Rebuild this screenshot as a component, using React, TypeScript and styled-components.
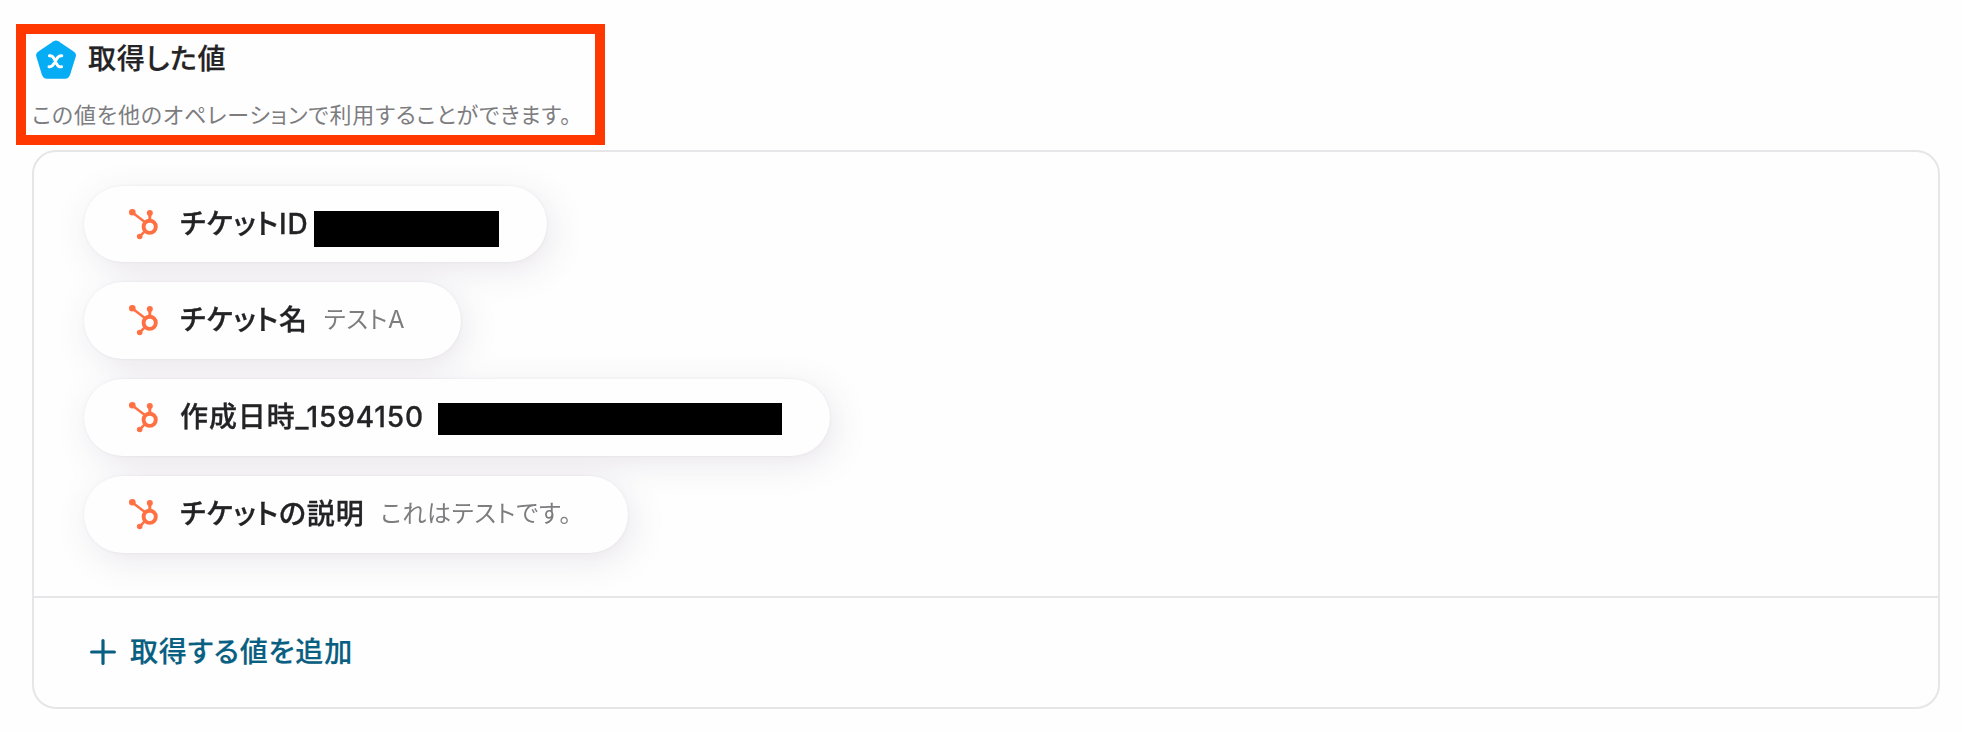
import React from "react";
import styled, { createGlobalStyle } from "styled-components";

const GlobalStyle = createGlobalStyle`
  *, *::before, *::after { box-sizing: border-box; }
  body {
    margin: 0;
    background: #fefefe;
    color: #232326;
    font-family: Inter, "Noto Sans CJK JP", sans-serif;
    font-feature-settings: "palt";
  }
`;

const Page = styled.main`
  display: flex;
  flex-direction: column;
  width: 1962px;
  height: 732px;
  padding: 24px 22px 23px 16px;
`;

const Highlight = styled.header`
  display: flex;
  flex-direction: column;
  align-items: flex-start;
  width: 589px;
  height: 121px;
  padding: 6px 0 0 6px;
  border: 10px solid #ff3700;
`;

const TitleRow = styled.div`
  display: flex;
  align-items: center;
  gap: 12px;
  height: 39px;
  padding-left: 4px;
`;

const Title = styled.h2`
  margin: -1px 0 0;
  font-size: 28px;
  line-height: 36px;
  font-weight: 500;
  letter-spacing: 0.8px;
  -webkit-text-stroke: 0.25px currentColor;
  white-space: nowrap;
`;

const Description = styled.p`
  margin: 20px 0 0;
  font-size: 22px;
  line-height: 32px;
  letter-spacing: 0.85px;
  color: #7d7d80;
  white-space: nowrap;
`;

const Card = styled.section`
  display: flex;
  flex-direction: column;
  width: 1908px;
  height: 559px;
  margin: 5px 0 0 16px;
  border: 2px solid #e6e5e7;
  border-radius: 24px;
`;

const ValueList = styled.ul`
  display: flex;
  flex: 1;
  flex-direction: column;
  align-items: flex-start;
  gap: 20px;
  margin: 0;
  padding: 33.7px 0 0 50px;
  list-style: none;
  filter: drop-shadow(0 0 1px rgba(60, 35, 80, 0.08)) drop-shadow(5px 8px 16px rgba(60, 35, 80, 0.11));
`;

const Pill = styled.li<{ $width: number }>`
  display: flex;
  align-items: center;
  width: ${(p) => p.$width}px;
  height: 76.8px;
  padding-left: 45px;
  border-radius: 39px;
  background: #fefefe;
  white-space: nowrap;
`;

const Name = styled.span`
  margin: -1px 0 0 22px;
  font-size: 28px;
  line-height: 40px;
  font-weight: 500;
  letter-spacing: 0.9px;
  -webkit-text-stroke: 0.3px currentColor;
`;

const Value = styled.span`
  margin: -1px 0 0 16px;
  font-size: 24px;
  line-height: 36px;
  letter-spacing: 0.8px;
  color: #7d7d80;
`;

const Redacted = styled.span<{ $width: number; $height: number; $gap: number; $drop: number }>`
  width: ${(p) => p.$width}px;
  height: ${(p) => p.$height}px;
  margin: ${(p) => p.$drop}px 0 0 ${(p) => p.$gap}px;
  background: #000;
`;

const Footer = styled.footer`
  display: flex;
  align-items: center;
  height: 111px;
  padding: 0 0 2px 56px;
  border-top: 2px solid #e6e5e7;
`;

const AddButton = styled.button`
  display: flex;
  align-items: center;
  gap: 14px;
  padding: 0;
  border: 0;
  background: none;
  color: #095f82;
  font: inherit;
  font-feature-settings: inherit;
  font-size: 28px;
  line-height: 40px;
  font-weight: 500;
  letter-spacing: 0.85px;
  -webkit-text-stroke: 0.2px currentColor;
  white-space: nowrap;
`;

const VariableIcon = () => (
  <svg width="40" height="39" viewBox="0 0 40 39" fill="none">
    <path
      d="M17.6 1.2Q20 -.4 22.4 1.2L38 11.8Q40.6 13.6 39.8 16.4L34.2 34.5Q32.8 38.7 29 38.7H11Q7.2 38.7 5.8 34.5L.3 16.4Q-.5 13.6 2 11.8Z"
      fill="#06adf5"
    />
    <path
      d="M13.4 15.8Q16.6 15.4 18.2 19L20.6 23.8Q22.4 27.4 25.6 26.8M25.8 15.8Q22.8 15.4 20.8 18.8L17.8 23.8Q15.8 27.2 13 26.8"
      stroke="#fff"
      strokeWidth="2.9"
      strokeLinecap="round"
    />
  </svg>
);

const SprocketIcon = () => (
  <svg width="29" height="31" viewBox="0 0 29 31" fill="none" stroke="#ff7043">
    <circle cx="20.7" cy="17.8" r="6.1" strokeWidth="3.9" />
    <path d="M4 4L15.5 12.7M10.7 27.5L15.5 22.7" strokeWidth="2.5" />
    <path d="M20.8 4V11" strokeWidth="3" />
    <g fill="#ff7043" stroke="none">
      <circle cx="3.3" cy="3.3" r="3.3" />
      <circle cx="20.8" cy="4" r="3" />
      <circle cx="10.7" cy="27.5" r="2.8" />
    </g>
  </svg>
);

const PlusIcon = () => (
  <svg width="26" height="26" viewBox="0 0 26 26" fill="none">
    <path d="M13 1.6V24.4M1.6 13H24.4" stroke="#095f82" strokeWidth="3.2" strokeLinecap="round" />
  </svg>
);

export default function App() {
  return (
    <Page>
      <GlobalStyle />
      <Highlight>
        <TitleRow>
          <VariableIcon />
          <Title>取得した値</Title>
        </TitleRow>
        <Description>この値を他のオペレーションで利用することができます。</Description>
      </Highlight>
      <Card>
        <ValueList>
          <Pill $width={463}>
            <SprocketIcon />
            <Name>チケットID</Name>
            <Redacted $width={185} $height={36} $gap={5.5} $drop={9} />
          </Pill>
          <Pill $width={377}>
            <SprocketIcon />
            <Name>チケット名</Name>
            <Value>テストA</Value>
          </Pill>
          <Pill $width={746}>
            <SprocketIcon />
            <Name>作成日時_1594150</Name>
            <Redacted $width={344} $height={32} $gap={14} $drop={3} />
          </Pill>
          <Pill $width={544}>
            <SprocketIcon />
            <Name>チケットの説明</Name>
            <Value>これはテストです。</Value>
          </Pill>
        </ValueList>
        <Footer>
          <AddButton type="button">
            <PlusIcon />
            取得する値を追加
          </AddButton>
        </Footer>
      </Card>
    </Page>
  );
}
